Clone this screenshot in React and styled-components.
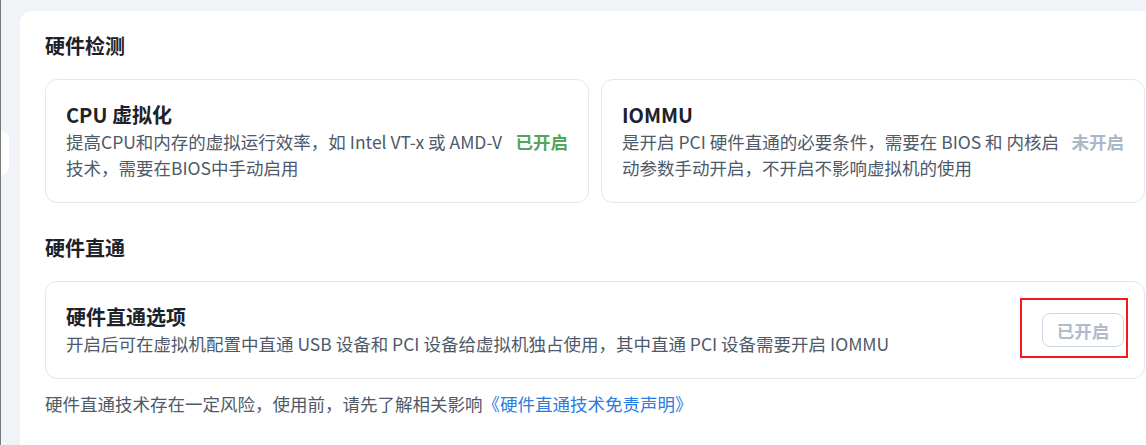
import React from "react";
import styled, { createGlobalStyle } from "styled-components";

const GlobalStyle = createGlobalStyle`
  html, body {
    margin: 0;
    padding: 0;
    background: #f0f3f8;
    overflow: hidden;
  }
  body {
    font-family: "Noto Sans CJK SC", "Noto Sans", sans-serif;
    color: #1d2129;
  }
`;

const Page = styled.div`
  display: flex;
  flex-direction: row;
  height: 445px;
  overflow: hidden;
  border-left: 1px solid #7a7a7a;
`;

const Rail = styled.div`
  width: 19px;
  flex-shrink: 0;
  padding-top: 131px;
`;

const RailTab = styled.div`
  width: 8px;
  height: 44px;
  background: #ffffff;
  border-radius: 0 8px 8px 0;
`;

const Panel = styled.div`
  flex-shrink: 0;
  width: 1150px;
  margin-top: 11px;
  background: #ffffff;
  border-radius: 12px 12px 0 0;
  padding: 21px 25px;
  box-sizing: border-box;
`;

const SectionTitle = styled.h2`
  margin: ${(p) => (p.$first ? "0" : "31px")} 0 19px;
  font-size: 20px;
  line-height: 28px;
  font-weight: 700;
  color: #1d2129;
`;

const Grid = styled.div`
  display: grid;
  grid-template-columns: 1fr 1fr;
  gap: 12px;
`;

const Card = styled.div`
  display: flex;
  flex-direction: row;
  align-items: center;
  gap: 6px;
  border: 1px solid #e3e7ee;
  border-radius: 12px;
  padding: 21px 20px 21px 20px;
`;

const CardBody = styled.div`
  flex: 1;
  min-width: 0;
`;

const CardTitle = styled.div`
  font-size: 20px;
  line-height: 28px;
  font-weight: 600;
  color: #1d2129;
`;

const CardDesc = styled.div`
  font-size: 17.5px;
  line-height: 26px;
  color: #4e5969;
`;

const Status = styled.span`
  flex-shrink: 0;
  font-size: 17.5px;
  font-weight: 700;
  color: ${(p) => (p.$on ? "#52a55a" : "#a9b7c9")};
`;

const ButtonWrap = styled.div`
  position: relative;
  flex-shrink: 0;
`;

const StatusButton = styled.button`
  width: 82px;
  height: 34px;
  border: 1px solid #cdd6e2;
  border-radius: 8px;
  background: #ffffff;
  font-family: inherit;
  font-size: 17.5px;
  font-weight: 700;
  color: #b0bccb;
  padding: 0;
`;

const Highlight = styled.div`
  position: absolute;
  left: -22px;
  right: -4px;
  top: -15px;
  bottom: -11px;
  border: 2px solid #f01c1c;
  pointer-events: none;
`;

const Note = styled.p`
  margin: 12px 0 0;
  font-size: 17.5px;
  line-height: 26px;
  color: #4e5969;
`;

const Link = styled.a`
  color: #2b7be0;
  text-decoration: none;
`;

const checks = [
  {
    title: "CPU 虚拟化",
    desc: "提高CPU和内存的虚拟运行效率，如 Intel VT-x 或 AMD-V 技术，需要在BIOS中手动启用",
    on: true,
  },
  {
    title: "IOMMU",
    desc: "是开启 PCI 硬件直通的必要条件，需要在 BIOS 和 内核启动参数手动开启，不开启不影响虚拟机的使用",
    on: false,
  },
];

export default function App() {
  return (
    <>
      <GlobalStyle />
      <Page>
        <Rail>
          <RailTab />
        </Rail>
        <Panel>
          <SectionTitle $first>硬件检测</SectionTitle>
          <Grid>
            {checks.map((c) => (
              <Card key={c.title}>
                <CardBody>
                  <CardTitle>{c.title}</CardTitle>
                  <CardDesc>{c.desc}</CardDesc>
                </CardBody>
                <Status $on={c.on}>{c.on ? "已开启" : "未开启"}</Status>
              </Card>
            ))}
          </Grid>

          <SectionTitle>硬件直通</SectionTitle>
          <Card>
            <CardBody>
              <CardTitle>硬件直通选项</CardTitle>
              <CardDesc>
                开启后可在虚拟机配置中直通 USB 设备和 PCI 设备给虚拟机独占使用，其中直通 PCI 设备需要开启 IOMMU
              </CardDesc>
            </CardBody>
            <ButtonWrap>
              <StatusButton disabled>已开启</StatusButton>
              <Highlight />
            </ButtonWrap>
          </Card>
          <Note>
            硬件直通技术存在一定风险，使用前，请先了解相关影响
            <Link href="#">《硬件直通技术免责声明》</Link>
          </Note>
        </Panel>
      </Page>
    </>
  );
}
